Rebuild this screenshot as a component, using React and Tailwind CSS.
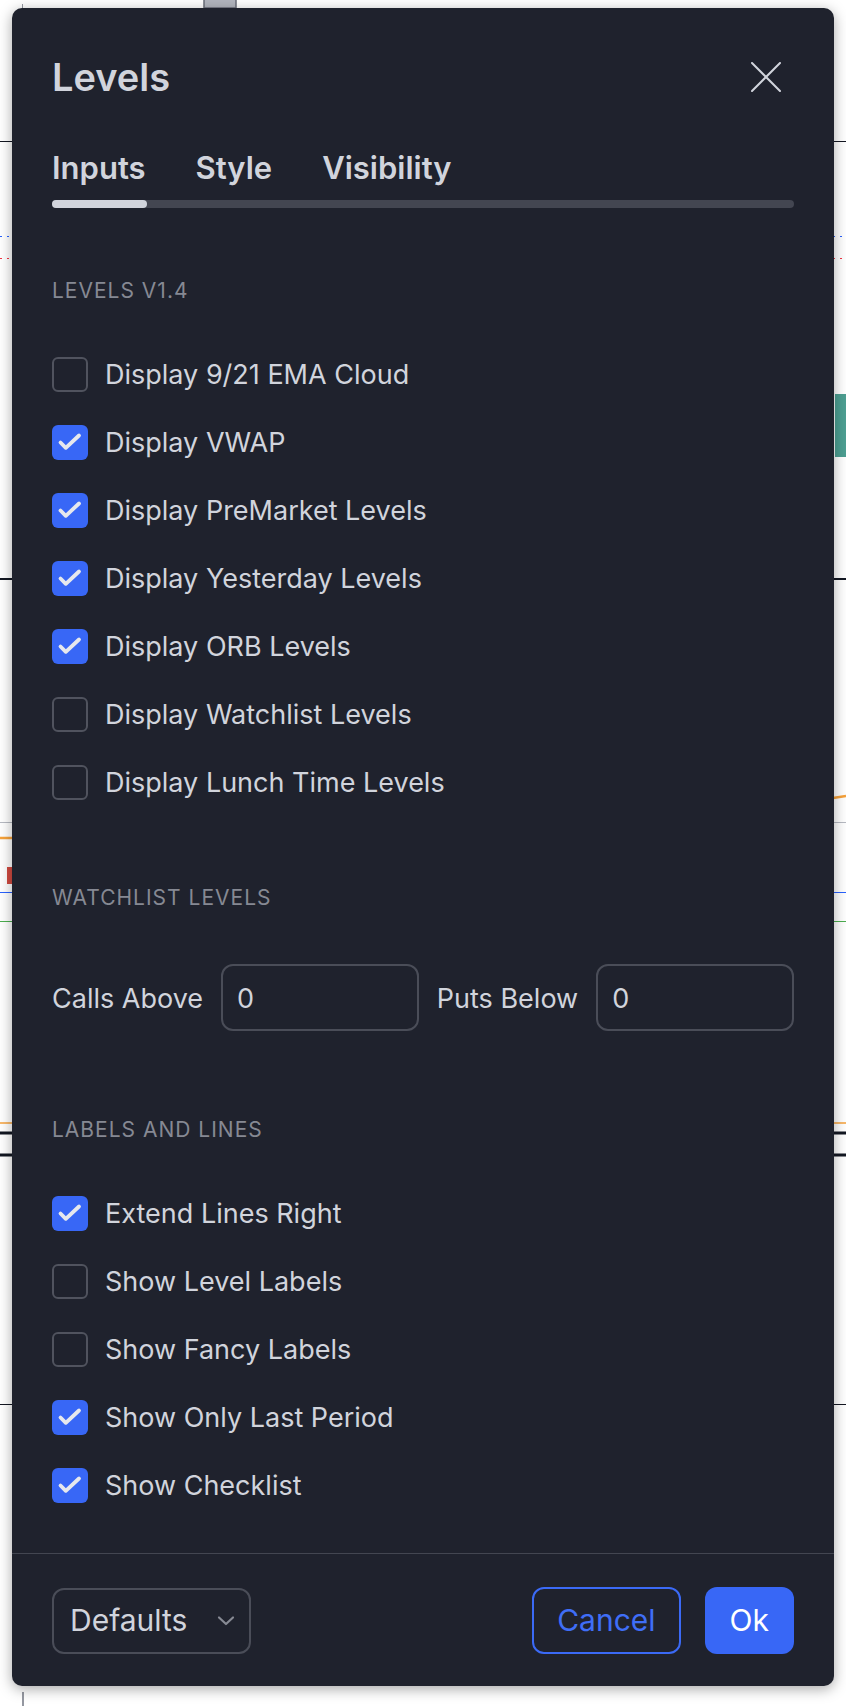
import React from "react";

const font = { fontFamily: 'Inter, "Noto Sans", sans-serif' };

function ChartBackground() {
  return (
    <svg className="absolute inset-0" width="846" height="1706" viewBox="0 0 846 1706">
      <rect x="204" y="-2" width="32" height="10" fill="#b2b5be" stroke="#6a6d78" strokeWidth="1.5" />
      <line x1="22.5" y1="4" x2="22.5" y2="12" stroke="#9598a1" strokeWidth="1" />
      <line x1="0" y1="141.5" x2="846" y2="141.5" stroke="#131722" strokeWidth="1" />
      <line x1="0" y1="236.5" x2="846" y2="236.5" stroke="#2962ff" strokeWidth="1.2" strokeDasharray="2 5" />
      <line x1="0" y1="258.5" x2="846" y2="258.5" stroke="#f23645" strokeWidth="1.2" strokeDasharray="2 5" />
      <rect x="835" y="394" width="11" height="63" fill="#4d9f92" />
      <line x1="0" y1="579" x2="846" y2="579" stroke="#131722" strokeWidth="2" />
      <line x1="0" y1="822.5" x2="846" y2="822.5" stroke="#b7bac2" strokeWidth="1" />
      <line x1="0" y1="838" x2="40" y2="838" stroke="#f7a23a" strokeWidth="2.5" />
      <line x1="820" y1="800" x2="846" y2="796" stroke="#f7a23a" strokeWidth="2.5" />
      <rect x="7" y="867" width="20" height="17" fill="#d24b41" />
      <line x1="0" y1="892.5" x2="846" y2="892.5" stroke="#2962ff" strokeWidth="1.2" />
      <line x1="0" y1="921.5" x2="846" y2="921.5" stroke="#4caf50" strokeWidth="1.2" />
      <line x1="0" y1="1123" x2="846" y2="1123" stroke="#f7a23a" strokeWidth="1.6" />
      <line x1="0" y1="1133" x2="846" y2="1133" stroke="#131722" strokeWidth="3" />
      <line x1="0" y1="1155" x2="846" y2="1155" stroke="#131722" strokeWidth="3" />
      <line x1="0" y1="1404.5" x2="846" y2="1404.5" stroke="#131722" strokeWidth="1" />
      <line x1="23" y1="1692" x2="23" y2="1706" stroke="#9598a1" strokeWidth="2" />
    </svg>
  );
}

function CheckRow({ label, checked }) {
  return (
    <div className="flex h-[35px] items-center">
      {checked ? (
        <div className="flex h-[35px] w-9 shrink-0 items-center justify-center rounded-[6px] bg-[#3867f6]">
          <svg width="36" height="35" viewBox="0 0 36 35">
            <path d="M8.5 17.5 L13.8 22.8 L27 10.5" fill="none" stroke="#e6e8ed" strokeWidth="3.8" strokeLinecap="round" strokeLinejoin="round" />
          </svg>
        </div>
      ) : (
        <div className="h-[35px] w-9 shrink-0 rounded-[6px] border-2 border-[#50535e]" />
      )}
      <span className="ml-[17px] text-[27px] leading-[35px] text-[#d1d4dc]">{label}</span>
    </div>
  );
}

function SectionHeader({ children, className }) {
  return (
    <div className={"text-[21px] leading-[28px] tracking-[1px] text-[#868993] " + className}>{children}</div>
  );
}

export default function App() {
  const group1 = [
    ["Display 9/21 EMA Cloud", false],
    ["Display VWAP", true],
    ["Display PreMarket Levels", true],
    ["Display Yesterday Levels", true],
    ["Display ORB Levels", true],
    ["Display Watchlist Levels", false],
    ["Display Lunch Time Levels", false],
  ];
  const group2 = [
    ["Extend Lines Right", true],
    ["Show Level Labels", false],
    ["Show Fancy Labels", false],
    ["Show Only Last Period", true],
    ["Show Checklist", true],
  ];
  return (
    <div className="relative min-h-[1706px] w-[846px] overflow-hidden bg-white" style={font}>
      <ChartBackground />
      <div className="relative ml-3 mt-2 flex h-[1678px] w-[822px] flex-col rounded-[10px] bg-[#1f222d] shadow-[0_3px_14px_rgba(0,0,0,0.35)]">
        <div className="px-10 pt-[46px]">
          <div className="flex items-center justify-between">
            <h1 className="text-[38px] font-semibold leading-[46px] text-[#d1d4dc]">Levels</h1>
            <button className="mr-[13px] flex h-[30px] w-[30px] items-center justify-center">
              <svg width="30" height="30" viewBox="0 0 30 30">
                <path d="M1 1 L29 29 M29 1 L1 29" stroke="#d1d4dc" strokeWidth="2" strokeLinecap="round" />
              </svg>
            </button>
          </div>

          <div className="mt-[49px] flex gap-[50px] text-[31px] font-semibold leading-[38px] text-[#d1d4dc]">
            <span>Inputs</span>
            <span>Style</span>
            <span>Visibility</span>
          </div>
          <div className="mt-[13px] h-2 w-full rounded-full bg-[#434651]">
            <div className="h-2 w-[95px] rounded-full bg-[#d1d4dc]" />
          </div>

          <SectionHeader className="mt-[69px]">LEVELS V1.4</SectionHeader>
          <div className="mt-[52px] flex flex-col gap-[33px]">
            {group1.map(([l, c]) => (
              <CheckRow key={l} label={l} checked={c} />
            ))}
          </div>

          <SectionHeader className="mt-[84px]">WATCHLIST LEVELS</SectionHeader>
          <div className="mt-[52px] flex items-center gap-[18px]">
            <span className="pt-[3px] text-[27px] text-[#d1d4dc]">Calls Above</span>
            <div className="flex h-[67px] flex-1 items-center rounded-[12px] border-2 border-[#4a4d58] pl-[14px] pt-[3px] text-[27px] text-[#d1d4dc]">0</div>
            <span className="pt-[3px] text-[27px] text-[#d1d4dc]">Puts Below</span>
            <div className="flex h-[67px] flex-1 items-center rounded-[12px] border-2 border-[#4a4d58] pl-[14px] pt-[3px] text-[27px] text-[#d1d4dc]">0</div>
          </div>

          <SectionHeader className="mt-[85px]">LABELS AND LINES</SectionHeader>
          <div className="mt-[52px] flex flex-col gap-[33px]">
            {group2.map(([l, c]) => (
              <CheckRow key={l} label={l} checked={c} />
            ))}
          </div>
        </div>

        <div className="mt-[50px] h-px w-full bg-[#434651]" />

        <div className="flex items-center justify-between px-10 pt-[33px]">
          <div className="flex h-[66px] w-[199px] items-center justify-between rounded-[12px] border-2 border-[#4a4d58] pl-4 pr-[13px]">
            <span className="text-[30px] text-[#d1d4dc]">Defaults</span>
            <svg width="20" height="12" viewBox="0 0 20 12">
              <path d="M3 2.5 L10 9 L17 2.5" fill="none" stroke="#878a94" strokeWidth="2.2" strokeLinecap="round" strokeLinejoin="round" />
            </svg>
          </div>
          <div className="flex items-center gap-6">
            <button className="flex h-[67px] items-center rounded-[12px] border-2 border-[#3b6af6] px-[23px] text-[30px] text-[#3f6ef7]">Cancel</button>
            <button className="flex h-[67px] items-center rounded-[12px] bg-[#3867f6] px-[25px] text-[30px] text-white">Ok</button>
          </div>
        </div>
      </div>
    </div>
  );
}
